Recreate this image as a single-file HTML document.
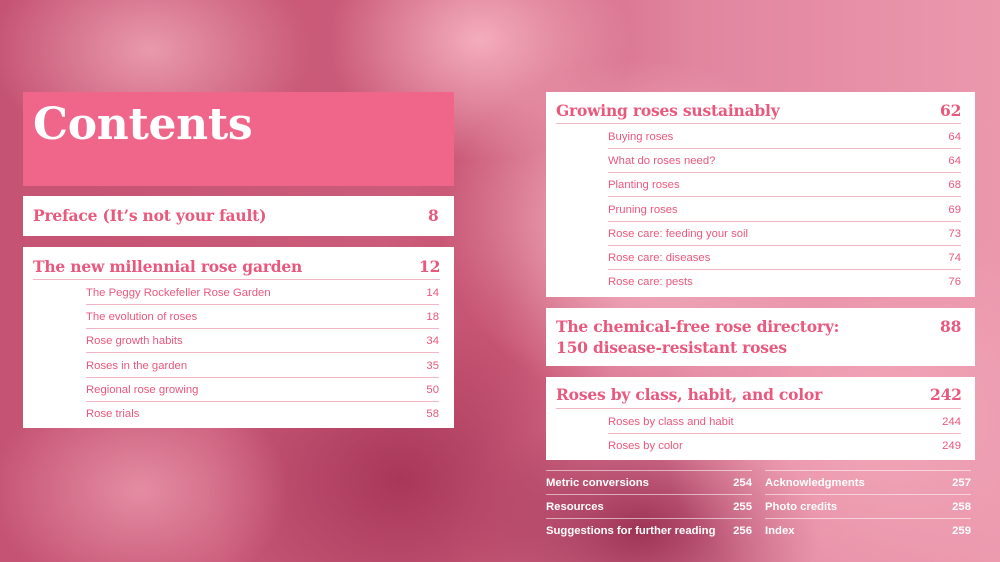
<!DOCTYPE html>
<html><head><meta charset="utf-8"><style>
*{margin:0;padding:0;box-sizing:border-box}
body{width:1000px;height:562px;overflow:hidden;position:relative;font-family:"Liberation Sans",sans-serif;
background:
radial-gradient(ellipse 200px 170px at 640px 230px,#f7b9c6 0%,rgba(247,185,198,0) 100%),
radial-gradient(ellipse 220px 200px at 880px 420px,#f2a6b8 0%,rgba(242,166,184,0) 100%),
radial-gradient(ellipse 150px 120px at 480px 40px,#f4adbd 0%,rgba(244,173,189,0) 100%),
radial-gradient(ellipse 160px 110px at 150px 50px,#e999ad 0%,rgba(233,153,173,0) 100%),
radial-gradient(ellipse 150px 110px at 140px 490px,#e48ca3 0%,rgba(228,140,163,0) 100%),
radial-gradient(ellipse 200px 170px at 400px 480px,#a8375a 0%,rgba(168,55,90,0) 100%),
radial-gradient(ellipse 180px 120px at 640px 530px,#9e3356 0%,rgba(158,51,86,0) 100%),
radial-gradient(ellipse 120px 200px at 500px 300px,#c4506f 0%,rgba(196,80,111,0) 100%),
linear-gradient(90deg,#c55373 0%,#cc5d7b 45%,#e286a0 70%,#eb98ad 100%);}
.box{position:absolute;background:#fff}
.h{position:absolute;font-family:"DejaVu Serif",serif;font-weight:bold;color:#e9587d;font-size:15.5px;letter-spacing:-.2px;line-height:21px}
.s{position:absolute;color:#e9587d;font-size:11.3px;line-height:14px}
.r{position:absolute;height:1px;background:#f2b5c4}
.w{position:absolute;color:#fff;font-size:11.3px;font-weight:bold;line-height:14px}
.wr{position:absolute;height:1px;background:rgba(255,255,255,.55)}
</style></head><body>
<div class="box" style="left:23px;top:92px;width:431px;height:94px;background:#f0668a"></div>
<div style="position:absolute;left:33px;top:98px;font-family:'DejaVu Serif',serif;font-weight:bold;color:#fff;font-size:44px;letter-spacing:-.3px;line-height:54px">Contents</div>

<div class="box" style="left:23px;top:196px;width:431px;height:40px"></div>
<div class="h" style="left:33px;top:205px">Preface (It’s not your fault)</div>
<div class="h" style="left:428px;top:205px">8</div>

<div class="box" style="left:23px;top:247px;width:431px;height:181px"></div>
<div class="h" style="left:33px;top:256px">The new millennial rose garden</div>
<div class="h" style="left:419px;top:256px">12</div>
<div class="r" style="left:33px;top:279px;width:407px"></div>

<div class="box" style="left:546px;top:92px;width:429px;height:205px"></div>
<div class="h" style="left:556px;top:100px">Growing roses sustainably</div>
<div class="h" style="left:940px;top:100px">62</div>
<div class="r" style="left:556px;top:123px;width:405px"></div>

<div class="box" style="left:546px;top:308px;width:429px;height:58px"></div>
<div class="h" style="left:556px;top:316px">The chemical-free rose directory:<br>150 disease-resistant roses</div>
<div class="h" style="left:940px;top:316px">88</div>

<div class="box" style="left:546px;top:377px;width:429px;height:83px"></div>
<div class="h" style="left:556px;top:384px">Roses by class, habit, and color</div>
<div class="h" style="left:930px;top:384px">242</div>
<div class="r" style="left:556px;top:408px;width:405px"></div>

<div id="subs"></div>
<script>
function sub(x,y,w,t,p,rule){
 var h='<div class="s" style="left:'+x+'px;top:'+(y-6)+'px">'+t+'</div><div class="s" style="left:'+x+'px;top:'+(y-6)+'px;width:'+w+'px;text-align:right">'+p+'</div>';
 if(rule)h+='<div class="r" style="left:'+x+'px;top:'+(y+12)+'px;width:'+w+'px"></div>';
 return h;}
var o='';
var L=[["The Peggy Rockefeller Rose Garden",14],["The evolution of roses",18],["Rose growth habits",34],["Roses in the garden",35],["Regional rose growing",50],["Rose trials",58]];
L.forEach(function(a,i){o+=sub(86,292+i*24.2,353,a[0],a[1],i<5)});
var R=[["Buying roses",64],["What do roses need?",64],["Planting roses",68],["Pruning roses",69],["Rose care: feeding your soil",73],["Rose care: diseases",74],["Rose care: pests",76]];
R.forEach(function(a,i){o+=sub(608,136+i*24.2,353,a[0],a[1],i<6)});
o+=sub(608,421,353,"Roses by class and habit",244,true)+sub(608,445,353,"Roses by color",249,false);
var B=[["Metric conversions",254,"Acknowledgments",257],["Resources",255,"Photo credits",258],["Suggestions for further reading",256,"Index",259]];
B.forEach(function(a,i){var y=482+i*24;
 o+='<div class="wr" style="left:546px;top:'+(y-12)+'px;width:206px"></div><div class="wr" style="left:765px;top:'+(y-12)+'px;width:206px"></div>';
 o+='<div class="w" style="left:546px;top:'+(y-6)+'px">'+a[0]+'</div><div class="w" style="left:546px;top:'+(y-6)+'px;width:206px;text-align:right">'+a[1]+'</div>';
 o+='<div class="w" style="left:765px;top:'+(y-6)+'px">'+a[2]+'</div><div class="w" style="left:765px;top:'+(y-6)+'px;width:206px;text-align:right">'+a[3]+'</div>';});
document.getElementById('subs').innerHTML=o;
</script>
</body></html>
